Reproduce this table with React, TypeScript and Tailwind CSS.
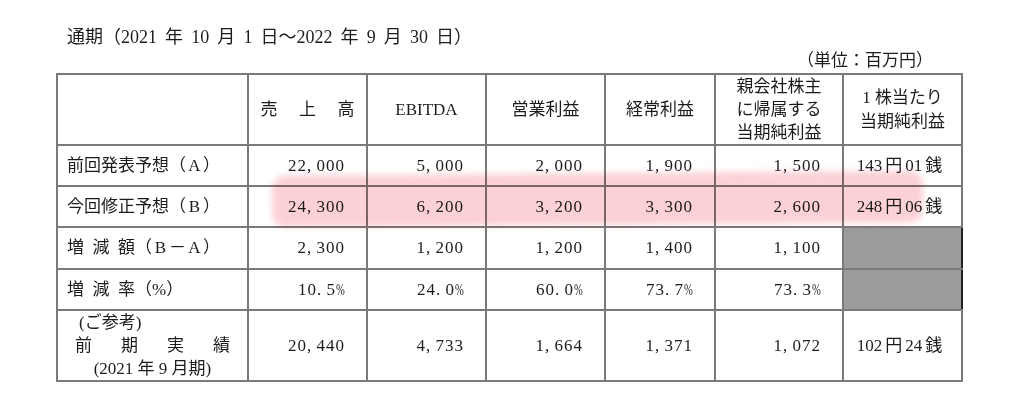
import type { ReactNode } from "react";

type Row = {
  label: ReactNode;
  values: string[];
  eps?: [string, string] | null;
  height: string;
};

// numbers in the scan sit in half-width cells: "22, 000", "10. 5%"
function Num({ v }: { v: string }) {
  return (
    <span className="tracking-[1px]">
      {v.split("").map((ch, i) => {
        if (ch === "," || ch === ".") {
          return (
            <span key={i} className="inline-block w-[9.5px] text-left">
              {ch}
            </span>
          );
        }
        if (ch === "%") {
          return (
            <span key={i} className="inline-block w-[9px] text-left">
              <span className="inline-block origin-left scale-x-[0.62]">%</span>
            </span>
          );
        }
        return <span key={i}>{ch}</span>;
      })}
    </span>
  );
}

function Eps({ yen, sen }: { yen: string; sen: string }) {
  return (
    <span>
      {yen}
      <span className="mx-[3px]">円</span>
      {sen}
      <span className="ml-[3px]">銭</span>
    </span>
  );
}

const W = ({ c }: { c: string }) => <span className="inline-block w-[1em] text-center">{c}</span>;

const rows: Row[] = [
  {
    label: (
      <span>
        前回発表予想（<W c="A" />）
      </span>
    ),
    values: ["22,000", "5,000", "2,000", "1,900", "1,500"],
    eps: ["143", "01"],
    height: "h-[41px]",
  },
  {
    label: (
      <span>
        今回修正予想（<W c="B" />）
      </span>
    ),
    values: ["24,300", "6,200", "3,200", "3,300", "2,600"],
    eps: ["248", "06"],
    height: "h-[41px]",
  },
  {
    label: (
      <span>
        <span className="[word-spacing:4.25px]">増 減 額</span>（<W c="B" />－<W c="A" />）
      </span>
    ),
    values: ["2,300", "1,200", "1,200", "1,400", "1,100"],
    eps: null,
    height: "h-[42px]",
  },
  {
    label: (
      <span>
        <span className="[word-spacing:4.25px]">増 減 率</span>（%）
      </span>
    ),
    values: ["10.5%", "24.0%", "60.0%", "73.7%", "73.3%"],
    eps: null,
    height: "h-[41px]",
  },
];

const cell = "border-2 border-[#7a7a7a]";

export default function App() {
  return (
    <div className="h-[416px] w-[1024px] overflow-hidden bg-white pt-[25px] font-['Liberation_Serif','Noto_Sans_CJK_JP',serif] text-[17px] text-[#1c1c1c]">
      <p className="pl-[67px] text-[18px] leading-[24px] [word-spacing:3.6px]">
        通期（2021 年 10 月 1 日～2022 年 9 月 30 日）
      </p>

      <div className="ml-[56px] w-[905px]">
        <p className="pr-[28px] text-right leading-[24px]">（単位：百万円）</p>

        <div className="relative">
          <table className="w-[905px] table-fixed border-collapse">
            <colgroup>
              <col className="w-[191px]" />
              <col className="w-[119px]" />
              <col className="w-[119px]" />
              <col className="w-[119px]" />
              <col className="w-[110px]" />
              <col className="w-[128px]" />
              <col className="w-[119px]" />
            </colgroup>
            <thead>
              <tr className="h-[69px] text-center align-middle">
                <th className={`${cell} font-normal`} />
                <th className={`${cell} font-normal`}>
                  <div className="mx-auto flex w-[94px] justify-between">
                    <span>売</span>
                    <span>上</span>
                    <span>高</span>
                  </div>
                </th>
                <th className={`${cell} font-normal`}>EBITDA</th>
                <th className={`${cell} font-normal`}>営業利益</th>
                <th className={`${cell} font-normal`}>経常利益</th>
                <th className={`${cell} font-normal leading-[23px]`}>
                  親会社株主
                  <br />
                  に帰属する
                  <br />
                  当期純利益
                </th>
                <th className={`${cell} font-normal leading-[24px]`}>
                  1 株当たり
                  <br />
                  当期純利益
                </th>
              </tr>
            </thead>
            <tbody>
              {rows.map((row, ri) => (
                <tr key={ri} className={row.height}>
                  <td className={`${cell} pl-[9px] text-left`}>{row.label}</td>
                  {row.values.map((v, i) => (
                    <td key={i} className={`${cell} pr-[21px] text-right`}>
                      <Num v={v} />
                    </td>
                  ))}
                  {row.eps ? (
                    <td className={`${cell} pr-[6px] text-center`}>
                      <Eps yen={row.eps[0]} sen={row.eps[1]} />
                    </td>
                  ) : (
                    <td className={`${cell} border-r-[#222] bg-[#9b9b9b]`} />
                  )}
                </tr>
              ))}
              <tr className="h-[69px]">
                <td className={`${cell} px-[17px] leading-[23px]`}>
                  <div className="pl-[4px]">(ご参考)</div>
                  <div className="flex justify-between">
                    <span>前</span>
                    <span>期</span>
                    <span>実</span>
                    <span>績</span>
                  </div>
                  <div className="text-center">(2021 年 9 月期)</div>
                </td>
                {["20,440", "4,733", "1,664", "1,371", "1,072"].map((v, i) => (
                  <td key={i} className={`${cell} pr-[21px] text-right`}>
                    <Num v={v} />
                  </td>
                ))}
                <td className={`${cell} pr-[6px] text-center`}>
                  <Eps yen="102" sen="24" />
                </td>
              </tr>
            </tbody>
          </table>

          {/* marker highlight over the revised forecast row */}
          <div className="pointer-events-none absolute left-[216px] top-[100px] h-[52px] w-[651px] -rotate-[0.45deg] rounded-[14px] bg-[#fbc6cb] opacity-80 mix-blend-multiply blur-[3px]" />
        </div>
      </div>
    </div>
  );
}
